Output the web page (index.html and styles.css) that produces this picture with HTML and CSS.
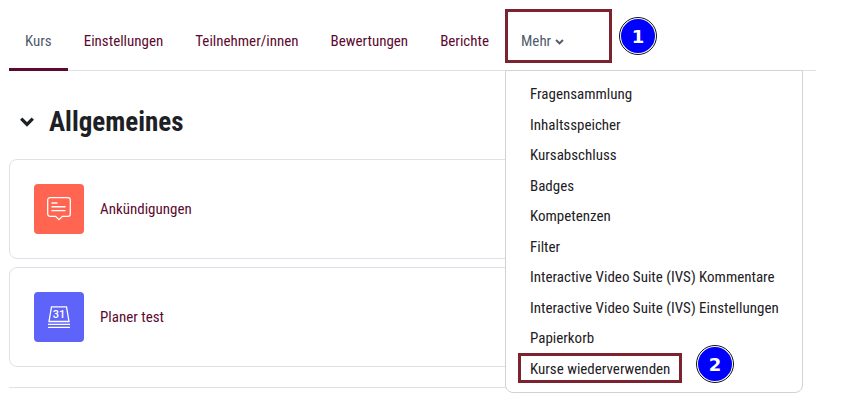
FILE: index.html
```html
<!DOCTYPE html>
<html lang="de">
<head>
<meta charset="utf-8">
<title>Kurs</title>
<link rel="stylesheet" href="styles.css">
</head>
<body>
<div class="page">
  <nav class="tabs">
    <a class="tab tab-active">Kurs</a>
    <a class="tab">Einstellungen</a>
    <a class="tab">Teilnehmer/innen</a>
    <a class="tab">Bewertungen</a>
    <a class="tab">Berichte</a>
    <a class="tab tab-more">Mehr
      <svg class="more-chevron" viewBox="0 0 10 7" width="9" height="6"><path d="M1 1.200 5 5.200l4-4" fill="none" stroke="currentColor" stroke-width="2.300"/></svg>
    </a>
  </nav>
  <main class="content">
    <div class="section-head">
      <svg class="section-chevron" viewBox="0 0 14 10" width="14" height="10"><path d="M1.200 1.600 7 7.400l5.800-5.800" fill="none" stroke="#1d2125" stroke-width="3.200"/></svg>
      <h2 class="section-title">Allgemeines</h2>
    </div>
    <div class="cards">
      <div class="card">
        <div class="icon icon-red">
          <svg viewBox="0 0 24 24" width="24" height="24" fill="none" stroke="#fff" stroke-width="1.300">
            <path d="M3 .7h18a2.300 2.300 0 0 1 2.300 2.300v14a2.300 2.300 0 0 1-2.300 2.300h-5.600L12 22.600l-3.400-3.300H3A2.300 2.300 0 0 1 .7 17V3A2.300 2.300 0 0 1 3 .7Z"/>
            <path d="M4.500 6h6M4.500 9.800h14M4.500 13.600h14" stroke-width="1.400"/>
          </svg>
        </div>
        <a class="card-link">Ankündigungen</a>
      </div>
      <div class="card">
        <div class="icon icon-blue">
          <svg viewBox="0 0 24 24" width="24" height="24" fill="none" stroke="#fff" stroke-width="1.300">
            <path d="M4.500 1.800h15L22 16.500H2Z"/>
            <path d="M1 19.400h22M1 22.400h22" stroke-width="1.400"/>
            <text x="12" y="13" text-anchor="middle" class="icon-date">31</text>
          </svg>
        </div>
        <a class="card-link">Planer test</a>
      </div>
    </div>
    <hr class="rule">
  </main>
</div>
<ul class="menu">
  <li>Fragensammlung</li>
  <li>Inhaltsspeicher</li>
  <li>Kursabschluss</li>
  <li>Badges</li>
  <li>Kompetenzen</li>
  <li>Filter</li>
  <li>Interactive Video Suite (IVS) Kommentare</li>
  <li>Interactive Video Suite (IVS) Einstellungen</li>
  <li>Papierkorb</li>
  <li>Kurse wiederverwenden</li>
</ul>
<div class="mark mark-more"></div>
<div class="mark mark-reuse"></div>
<div class="badge badge-one">1</div>
<div class="badge badge-two">2</div>
</body>
</html>
```
FILE: styles.css
```css
* { box-sizing: border-box; }
html, body { margin: 0; height: 408px; overflow: hidden; background: #fff; }
body { font-family: "Roboto Condensed", Roboto, "Liberation Sans", sans-serif; font-stretch: 75%; font-size: 15px; color: #1d2125; position: relative; }
.page { width: 816px; padding-left: 9px; }
.tabs { display: flex; height: 71px; border-bottom: 1px solid #dee2e6; }
.tab { height: 71px; padding: 32px 16px 0; line-height: 18px; color: #5c0a30; white-space: nowrap; }
.tab-active { color: #4f5b6b; border-bottom: 3px solid #5c0a30; }
.tab-more { color: #4f5b6b; }
.more-chevron { vertical-align: 1px; }
.content { width: 700px; }
.section-head { display: flex; align-items: center; height: 28px; margin-top: 37px; }
.section-chevron { margin-left: 11px; margin-right: 15px; }
.section-title { margin: 0; font-size: 27px; font-weight: 700; line-height: 28px; color: #1d2125; }
.cards { display: flex; flex-direction: column; gap: 8px; margin-top: 23px; }
.card { display: flex; align-items: center; gap: 16px; height: 100px; padding-left: 24px; border: 1px solid #dee2e6; border-radius: 8px; }
.icon { display: flex; align-items: center; justify-content: center; width: 50px; height: 50px; border-radius: 4px; }
.icon-red { background: #ff6550; }
.icon-blue { background: #5e63fa; }
.icon-date { fill: #fff; stroke: none; font: 500 11px Roboto, sans-serif; font-stretch: 100%; }
.card-link { color: #5c0a30; }
.rule { margin: 20px 0 0; border: 0; border-top: 1px solid #dee2e6; }
.menu { position: absolute; left: 505px; top: 70px; width: 298px; height: 323px; margin: 0; padding: 8px 0 0; list-style: none; background: #fff; border: 1px solid #cfd2d6; border-radius: 0 0 8px 8px; }
.menu li { height: 30.5px; padding-left: 24px; line-height: 30px; white-space: nowrap; }
.mark { position: absolute; border: 3px solid #7b2331; }
.mark-more { left: 505px; top: 9px; width: 107px; height: 54px; }
.mark-reuse { left: 518px; top: 353px; width: 164px; height: 30px; }
.badge { position: absolute; width: 38px; height: 38px; display: flex; align-items: center; justify-content: center; border-radius: 50%; background: #0000ff; border: 2px solid #fff; outline: 1.5px solid #111; outline-offset: -1px; color: #fff; font: 700 18px "DejaVu Sans", sans-serif; }
.badge-one { left: 619px; top: 17px; }
.badge-two { left: 696px; top: 345px; }
```
